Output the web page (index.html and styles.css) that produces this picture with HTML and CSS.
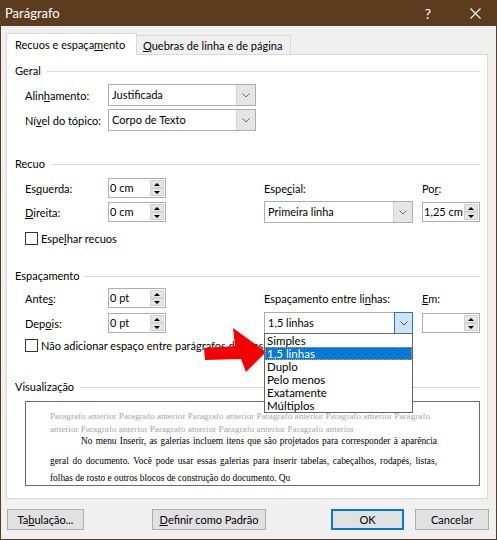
FILE: index.html
```html
<!DOCTYPE html>
<html lang="pt">
<head>
<meta charset="utf-8">
<title>Parágrafo</title>
<link rel="stylesheet" href="styles.css">
</head>
<body>
<div class="window">
  <div class="titlebar">
    <span class="title">Parágrafo</span>
    <span class="help">?</span>
    <span class="close"><svg width="11" height="11" viewBox="0 0 11 11"><path d="M0.5 0.5L10.5 10.5M10.5 0.5L0.5 10.5" stroke="#fff" stroke-width="1.1" fill="none"/></svg></span>
  </div>
  <div class="content">
    <div class="tabs">
      <div class="tab active">Recuos e espaça<u>m</u>ento</div>
      <div class="tab inactive"><u>Q</u>uebras de linha e de página</div>
    </div>
    <div class="panel">
      <div class="legend geral-legend"><span>Geral</span></div>
      <div class="grid-geral">
        <span class="lbl">Alin<u>h</u>amento:</span>
        <div class="combo"><span class="val">Justificada</span><span class="drop"><svg width="8" height="5" viewBox="0 0 8 5"><path d="M0.5 0.5L4 4L7.5 0.5" stroke="#6a6a6a" fill="none"/></svg></span></div>
        <span class="lbl">Ní<u>v</u>el do tópico:</span>
        <div class="combo"><span class="val">Corpo de Texto</span><span class="drop"><svg width="8" height="5" viewBox="0 0 8 5"><path d="M0.5 0.5L4 4L7.5 0.5" stroke="#6a6a6a" fill="none"/></svg></span></div>
      </div>

      <div class="legend recuo-legend"><span>Recuo</span></div>
      <div class="grid-3 recuo">
        <span class="lbl c1 r1">Es<u>q</u>uerda:</span>
        <div class="spin c2 r1"><span class="val">0 cm</span><span class="btns"><i class="up"></i><i class="dn"></i></span></div>
        <span class="lbl c4 r1">Espe<u>c</u>ial:</span>
        <span class="lbl c6 r1">Po<u>r</u>:</span>
        <span class="lbl c1 r2"><u>D</u>ireita:</span>
        <div class="spin c2 r2"><span class="val">0 cm</span><span class="btns"><i class="up"></i><i class="dn"></i></span></div>
        <div class="combo c4 r2"><span class="val">Primeira linha</span><span class="drop"><svg width="8" height="5" viewBox="0 0 8 5"><path d="M0.5 0.5L4 4L7.5 0.5" stroke="#6a6a6a" fill="none"/></svg></span></div>
        <div class="spin c6 r2"><span class="val">1,25 cm</span><span class="btns"><i class="up"></i><i class="dn"></i></span></div>
      </div>
      <div class="check check-recuo"><span class="box"></span><span>Espe<u>l</u>har recuos</span></div>

      <div class="legend esp-legend"><span>Espaçamento</span></div>
      <div class="grid-3 esp">
        <span class="lbl c1 r1">Ante<u>s</u>:</span>
        <div class="spin c2 r1"><span class="val">0 pt</span><span class="btns"><i class="up"></i><i class="dn"></i></span></div>
        <span class="lbl c4 r1">Espaçamento entre li<u>n</u>has:</span>
        <span class="lbl c6 r1"><u>E</u>m:</span>
        <span class="lbl c1 r2">Dep<u>o</u>is:</span>
        <div class="spin c2 r2"><span class="val">0 pt</span><span class="btns"><i class="up"></i><i class="dn"></i></span></div>
        <div class="combo focus c4 r2"><span class="val">1,5 linhas</span><span class="drop"><svg width="8" height="5" viewBox="0 0 8 5"><path d="M0.5 0.5L4 4L7.5 0.5" stroke="#4a4a4a" fill="none"/></svg></span>
          <div class="list">
            <div>Simples</div>
            <div class="sel">1,5 linhas</div>
            <div>Duplo</div>
            <div>Pelo menos</div>
            <div>Exatamente</div>
            <div>Múltiplos</div>
          </div>
        </div>
        <div class="spin c6 r2"><span class="val"></span><span class="btns"><i class="up"></i><i class="dn"></i></span></div>
      </div>
      <div class="check check-esp"><span class="box"></span><span>Não adicionar espaço entre parágrafos do mesmo estilo</span></div>

      <div class="legend prev-legend"><span>Visualização</span></div>
      <div class="preview">
        <div class="prev-grey">Paragrafo anterior Paragrafo anterior Paragrafo anterior Paragrafo anterior Paragrafo anterior Paragrafo</div>
        <div class="prev-grey">anterior Paragrafo anterior Paragrafo anterior Paragrafo anterior Paragrafo anterior</div>
        <div class="prev-line first">No menu Inserir, as galerias incluem itens que são projetados para corresponder à aparência</div>
        <div class="prev-line second">geral do documento. Você pode usar essas galerias para inserir tabelas, cabeçalhos, rodapés, listas,</div>
        <div class="prev-line last">folhas de rosto e outros blocos de construção do documento. Qu</div>
      </div>
    </div>
    <div class="buttons">
      <div class="btn btn-tab">Ta<u>b</u>ulação...</div>
      <div class="btn btn-def"><u>D</u>efinir como Padrão</div>
      <div class="btn btn-ok">OK</div>
      <div class="btn btn-cancel">Cancelar</div>
    </div>
  </div>
  <svg class="arrow" width="70" height="52" viewBox="0 0 70 52"><polygon points="4,24 35,22 33,4 66,28 46,48 41,35 5,36" fill="#f20000"/></svg>
</div>
</body>
</html>
```
FILE: styles.css
```css
* { box-sizing: border-box; }
html, body { margin: 0; padding: 0; }
body {
  width: 497px; height: 540px; overflow: hidden;
  background: #f0f0f0;
  font-family: Lato, "Liberation Sans", Arial, sans-serif;
  font-size: 11px; color: #000;
}
u { text-decoration: underline; text-underline-offset: 1px; }

.window {
  position: relative; width: 497px; height: 540px;
  background: #f0f0f0;
  border: 1px solid #5c3c1e; border-top: 0;
}
.titlebar {
  display: flex; align-items: center;
  height: 26px; margin: 0 -1px; padding: 0 6px 0 5px;
  background: #5c3c1e; color: #fff;
}
.title { flex: 1; font-size: 13px; }
.help { width: 32px; text-align: center; font-size: 14px; margin-right: 15px; }
.close { width: 32px; display: flex; justify-content: center; }

.content { padding: 7px 0 0 5px; }
.tabs { display: flex; align-items: flex-end; height: 21px; position: relative; z-index: 1; }
.tab { background: #f0f0f0; border: 1px solid #d9d9d9; border-bottom: 0; white-space: nowrap; }
.tab.active { width: 131px; height: 22px; margin-bottom: -1px; background: #fff; padding: 4px 0 0 8px; }
.tab.inactive { width: 154px; height: 19px; border-left: 0; padding: 3px 0 0 6px; }

.panel { width: 482px; height: 445px; border: 1px solid #d9d9d9; background: #fff; }

.legend { display: flex; align-items: center; height: 14px; line-height: 14px; padding: 0 7px 0 8px; }
.legend::after { content: ""; flex: 1; height: 1px; background: #dcdcdc; margin-left: 6px; }
.geral-legend { margin-top: 9px; }
.recuo-legend { margin-top: 26px; }
.esp-legend { margin-top: 24px; }
.prev-legend { margin-top: 28px; }

.lbl { white-space: nowrap; }

.grid-geral {
  display: grid; grid-template-columns: 83px 148px; grid-auto-rows: 22px;
  row-gap: 3px; margin: 6px 0 0 18px; align-items: center;
}
.grid-3 {
  display: grid; grid-template-columns: 83px 58px 98px 149px 9px 58px;
  grid-template-rows: 20px 22px; align-items: center; margin-left: 18px;
}
.recuo { row-gap: 3px; margin-top: 7px; }
.esp { row-gap: 4px; margin-top: 5px; }
.c1 { grid-column: 1; } .c2 { grid-column: 2; } .c4 { grid-column: 4; } .c6 { grid-column: 6; }
.r1 { grid-row: 1; } .r2 { grid-row: 2; }

.combo { position: relative; display: flex; height: 22px; border: 1px solid #adadad; background: #fff; }
.combo .val { flex: 1; padding-left: 3px; line-height: 20px; white-space: nowrap; }
.combo .drop { width: 19px; display: flex; align-items: center; justify-content: center; background: #e5e5e5; border-left: 1px solid #d4d4d4; }
.combo.focus .drop { background: #cce4f7; border: 1px solid #2f74b5; margin: -1px -1px -1px 0; width: 19px; }

.spin { display: flex; height: 20px; border: 1px solid #adadad; background: #fff; }
.spin .val { flex: 1; padding-left: 1px; line-height: 18px; white-space: nowrap; }
.spin .btns { width: 16px; display: flex; flex-direction: column; padding: 1px; }
.spin .btns i { flex: 1; display: flex; align-items: center; justify-content: center; background: #e5e5e5; border: 1px solid #d2d2d2; }
.spin .btns i::before { content: ""; border-left: 3px solid transparent; border-right: 3px solid transparent; }
.spin .btns .up::before { border-bottom: 3px solid #000; }
.spin .btns .dn::before { border-top: 3px solid #000; }

.check { display: flex; align-items: center; height: 13px; margin-left: 18px; white-space: nowrap; }
.check .box { width: 13px; height: 13px; border: 1px solid #333; background: #fff; margin-right: 3px; flex: none; }
.check-recuo { margin-top: 9px; }
.check-esp { margin-top: 5px; }

.list {
  position: absolute; left: -1px; top: 20px; width: 149px; height: 80px;
  border: 1px solid #646464; background: #fff; z-index: 5;
  font-size: 11.5px;
}
.list div { height: 13px; line-height: 13px; padding-left: 2px; }
.list .sel { background: #0078d7; color: #fff; outline: 1px dotted #f0a030; outline-offset: -1px; }

.preview {
  margin: 7px 0 0 18px; width: 455px; height: 85px;
  border: 1px solid #6d6d6d; background: #fff;
  padding: 8px 42px 0 24px; overflow: hidden;
  font-family: "Liberation Serif", "Times New Roman", serif;
}
.prev-grey { color: #a6a6a6; font-size: 9.2px; line-height: 12.5px; white-space: nowrap; }
.prev-line { font-size: 9.4px; height: 13px; line-height: 13px; }
.prev-line.first { text-indent: 31px; text-align: justify; text-align-last: justify; }
.prev-line.second { margin-top: 7px; text-align: justify; text-align-last: justify; }
.prev-line.last { margin-top: 4px; white-space: nowrap; }

.buttons { display: flex; margin-top: 10px; height: 21px; }
.btn { height: 21px; background: #e1e1e1; border: 1px solid #adadad; display: flex; align-items: center; justify-content: center; white-space: nowrap; }
.btn-tab { width: 77px; margin-left: 1px; }
.btn-def { width: 114px; margin-left: 68px; }
.btn-ok { width: 73px; margin-left: 65px; border: 2px solid #0078d7; }
.btn-cancel { width: 74px; margin-left: 11px; }

.arrow { position: absolute; left: 199px; top: 324px; }
```
